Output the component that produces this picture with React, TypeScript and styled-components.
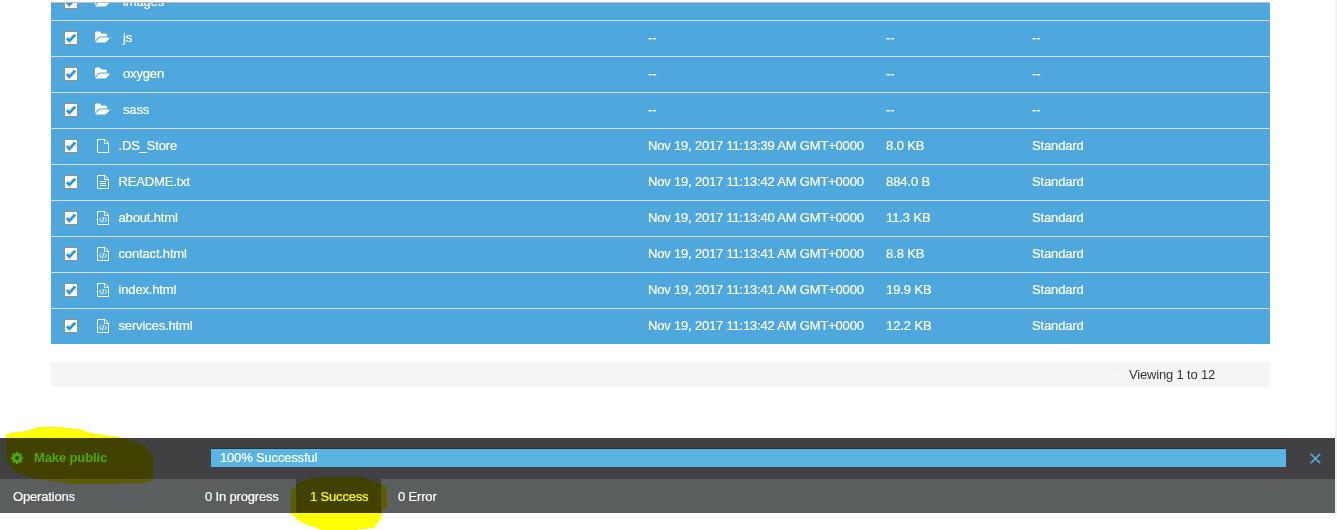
import React from "react";
import styled, { createGlobalStyle, css } from "styled-components";

const GlobalStyle = createGlobalStyle`
  * { box-sizing: border-box; }
  html, body { margin: 0; padding: 0; background: #fff; overflow: hidden; }
  body { font-family: "Liberation Sans", Arial, sans-serif; font-size: 13px; color: #333; }
`;

const Page = styled.div`
  position: relative;
  width: 1337px;
  height: 530px;
  overflow: hidden;
  background: #fff;
`;

const Main = styled.main`
  height: 438px;
  padding: 2px 65px 0 51px;
  border-right: 2px solid #f0f0f0;
`;

const Table = styled.div`
  display: flex;
  flex-direction: column;
  justify-content: flex-end;
  height: 342px;
  overflow: hidden;
  border-top: 1px solid #bdbdbd;
  color: #fff;
  -webkit-text-stroke: 0.2px #fff;
`;

const Row = styled.div`
  flex: none;
  display: grid;
  grid-template-columns: 44px 553px 238px 146px 1fr;
  height: 36px;
  padding-bottom: 1px;
  background: #4ea8dd;
  border-bottom: 1px solid #dcdcdc;
  &:last-child { height: 35px; border-bottom: 0; }
`;

const Cell = styled.div`
  display: flex;
  align-items: center;
  white-space: pre;
`;

const CheckCell = styled(Cell)`
  padding-left: 13px;
`;

const Checkbox = styled.span`
  display: flex;
  width: 14px;
  height: 14px;
  border: 1px solid #8f8f8f;
  background: #fff;
`;

const NameCell = styled(Cell)<{ $folder: boolean }>`
  gap: ${(p) => (p.$folder ? 13 : 9.5)}px;
  padding-left: ${(p) => (p.$folder ? 0 : 2)}px;
`;

const Text = styled.span<{ $tracking?: number }>`
  padding-bottom: 2px;
  line-height: 15px;
  letter-spacing: ${(p) => p.$tracking ?? -0.15}px;
`;

const Pager = styled.div`
  display: flex;
  align-items: center;
  justify-content: flex-end;
  gap: 9px;
  height: 25px;
  margin-top: 18px;
  padding-right: 41px;
  background: #f4f6f6;
  color: #333;
  svg { margin-top: 3px; }
`;

const PagerText = styled.span`
  line-height: 15px;
  letter-spacing: -0.18px;
`;

const Panel = styled.footer`
  width: 1337px;
  height: 75px;
  border-right: 2px solid #f0f0f0;
  color: #fff;
`;

const StatusBar = styled.div`
  display: flex;
  height: 41px;
  padding: 10px 13px 0 11px;
  background: #414143;
`;

const JobTitle = styled.div`
  display: flex;
  align-items: center;
  gap: 11px;
  width: 200px;
  height: 19px;
  color: #4ea8dd;
  font-weight: bold;
  letter-spacing: -0.12px;
`;

const Progress = styled.div`
  width: 1075px;
  height: 19px;
  padding-left: 9px;
  border-top: 1px solid #302f31;
  background: #57b4e3;
  line-height: 17px;
  letter-spacing: -0.17px;
  -webkit-text-stroke: 0.2px #fff;
`;

const CloseButton = styled.button`
  display: flex;
  margin: 5px 0 0 24px;
  padding: 0;
  width: 11px;
  height: 11px;
  border: 0;
  background: none;
`;

const Tabs = styled.div`
  display: flex;
  height: 34px;
  background: #5a5e5f;
  line-height: 36px;
  letter-spacing: -0.17px;
  -webkit-text-stroke: 0.2px #fff;
`;

const TabLabel = styled.div`
  width: 188px;
  padding-left: 13px;
`;

const Tab = styled.div<{ $width: number; $pad: number; $active?: boolean }>`
  width: ${(p) => p.$width}px;
  padding-left: ${(p) => p.$pad}px;
  ${(p) => p.$active && css`background: #414143;`}
`;

const Marker = styled.svg`
  position: absolute;
  left: 0;
  top: 0;
  mix-blend-mode: multiply;
  pointer-events: none;
`;

const Tick = () => (
  <svg width="12" height="12" viewBox="0 0 12 12">
    <path d="M1.800 6.300L4.400 8.800L10.200 2.600" fill="none" stroke="#2e96d5" strokeWidth="2.800" />
  </svg>
);

const FolderIcon = () => (
  <svg width="15" height="14" viewBox="0 64 1920 1792" fill="#fff">
    <path d="M1879 952q0 31-31 66l-336 396q-43 51-120.500 86.500t-143.500 35.500h-1088q-34 0-60.500-13t-26.500-43q0-31 31-66l336-396q43-51 120.500-86.500t143.500-35.500h1088q34 0 60.500 13t26.500 43zm-343-344v160h-832q-94 0-197 47.500t-164 119.500l-337 396-5 6q0-4-.5-12.500t-.5-12.500v-960q0-92 66-158t158-66h320q92 0 158 66t66 158v32h544q92 0 158 66t66 158z" />
  </svg>
);

type Kind = "folder" | "blank" | "text" | "code";

const FileIcon = ({ kind }: { kind: Kind }) => (
  <svg width="12" height="14" viewBox="0 0 12 14" fill="none" stroke="#fff">
    <path d="M.5 .5H8L11.500 4V13.500H.5Z" />
    <path d="M7.500 .5V4.500H11.500" />
    {kind === "text" && <path d="M3 6.500H9M3 8.500H9M3 10.500H9" />}
    {kind === "code" && <path d="M4.300 6.500L2.500 8.700L4.300 10.900M7.900 6.500L9.700 8.700L7.900 10.900M6.700 6L5.500 11.500" strokeWidth="1" />}
  </svg>
);

const Gear = () => (
  <svg width="12" height="12" viewBox="0 0 1536 1536" fill="#4ea8dd">
    <path d="M1024 768q0-106-75-181t-181-75-181 75-75 181 75 181 181 75 181-75 75-181zm512-109v222q0 12-8 23t-20 13l-185 28q-19 54-39 91 35 50 107 138 10 12 10 25t-9 23q-27 37-99 108t-94 71q-12 0-26-9l-138-108q-44 23-91 38-16 136-29 186-7 28-36 28h-222q-14 0-24.500-8.500t-11.500-21.500l-28-184q-49-16-90-37l-141 107q-10 9-25 9-14 0-25-11-126-114-165-168-7-10-7-23 0-12 8-23 15-21 51-66.500t54-70.500q-27-50-41-99l-183-27q-13-2-21-12.500t-8-23.500v-222q0-12 8-23t19-13l186-28q14-46 39-92-40-57-107-138-10-12-10-24 0-10 9-23 26-36 98.500-107.500t94.500-71.500q13 0 26 10l138 107q44-23 91-38 16-136 29-186 7-28 36-28h222q14 0 24.500 8.500t11.500 21.500l28 184q49 16 90 37l142-107q9-9 24-9 13 0 25 10 129 119 165 170 7 8 7 22 0 12-8 23-15 21-51 66.500t-54 70.500q26 50 41 98l183 28q13 2 21 12.500t8 23.500z" />
  </svg>
);

const Chevron = ({ right }: { right?: boolean }) => (
  <svg width="5" height="8" viewBox="0 0 5 8" fill="none" stroke="#fff" strokeWidth="1.500">
    <path d={right ? "M1 1L4 4L1 7" : "M4 1L1 4L4 7"} />
  </svg>
);

const rows: { name: string; kind: Kind; date: string; size: string; type: string }[] = [
  { name: "images", kind: "folder", date: "", size: "", type: "" },
  { name: "js", kind: "folder", date: "--", size: "--", type: "--" },
  { name: "oxygen", kind: "folder", date: "--", size: "--", type: "--" },
  { name: "sass", kind: "folder", date: "--", size: "--", type: "--" },
  { name: ".DS_Store", kind: "blank", date: "Nov 19, 2017 11:13:39 AM GMT+0000", size: "8.0 KB", type: "Standard" },
  { name: "README.txt", kind: "text", date: "Nov 19, 2017 11:13:42 AM GMT+0000", size: "884.0 B", type: "Standard" },
  { name: "about.html", kind: "code", date: "Nov 19, 2017 11:13:40 AM GMT+0000", size: "11.3 KB", type: "Standard" },
  { name: "contact.html", kind: "code", date: "Nov 19, 2017 11:13:41 AM GMT+0000", size: "8.8 KB", type: "Standard" },
  { name: "index.html", kind: "code", date: "Nov 19, 2017 11:13:41 AM GMT+0000", size: "19.9 KB", type: "Standard" },
  { name: "services.html", kind: "code", date: "Nov 19, 2017 11:13:42 AM GMT+0000", size: "12.2 KB", type: "Standard" },
];

export default function App() {
  return (
    <Page>
      <GlobalStyle />
      <Main>
        <Table>
          {rows.map((r) => (
            <Row key={r.name}>
              <CheckCell><Checkbox><Tick /></Checkbox></CheckCell>
              <NameCell $folder={r.kind === "folder"}>
                {r.kind === "folder" ? <FolderIcon /> : <FileIcon kind={r.kind} />}
                <Text>{r.name}</Text>
              </NameCell>
              <Cell><Text $tracking={-0.19}>{r.date}</Text></Cell>
              <Cell><Text $tracking={-0.1}>{r.size}</Text></Cell>
              <Cell><Text>{r.type}</Text></Cell>
            </Row>
          ))}
        </Table>
        <Pager>
          <Chevron />
          <PagerText>Viewing 1 to 12</PagerText>
          <Chevron right />
        </Pager>
      </Main>
      <Panel>
        <StatusBar>
          <JobTitle><Gear /><span>Make public</span></JobTitle>
          <Progress>100% Successful</Progress>
          <CloseButton aria-label="Close">
            <svg width="11" height="11" viewBox="0 0 11 11" stroke="#4ea8dd" strokeWidth="1.800">
              <path d="M.8 .8L10.200 10.200M10.200 .8L.8 10.200" />
            </svg>
          </CloseButton>
        </StatusBar>
        <Tabs>
          <TabLabel>Operations</TabLabel>
          <Tab $width={108} $pad={17}>0 In progress</Tab>
          <Tab $width={85} $pad={14} $active>1 Success</Tab>
          <Tab $width={90} $pad={17}>0 Error</Tab>
        </Tabs>
      </Panel>
      <Marker width="1337" height="530" fill="#ff0" shapeRendering="crispEdges">
        <path d="M6 434L16 432L28 431L32 429L38 427H62L64 428L80 429L84 431L91 433L103 435L120 437L131 441L142 444L147 448L150 452L153 457V481L145 482L143 483H117V484H68V483L50 481L32 478L16 473L10 466L7 460L6 456Z" />
        <path d="M291 490L296 486L298 483L303 481L313 478L330 477H357L365 478L375 482L381 484L387 487V508L382 510L381 519L376 525L375 528L358 529V530H320V529L313 527L303 523L295 518L291 513Z" />
      </Marker>
    </Page>
  );
}
